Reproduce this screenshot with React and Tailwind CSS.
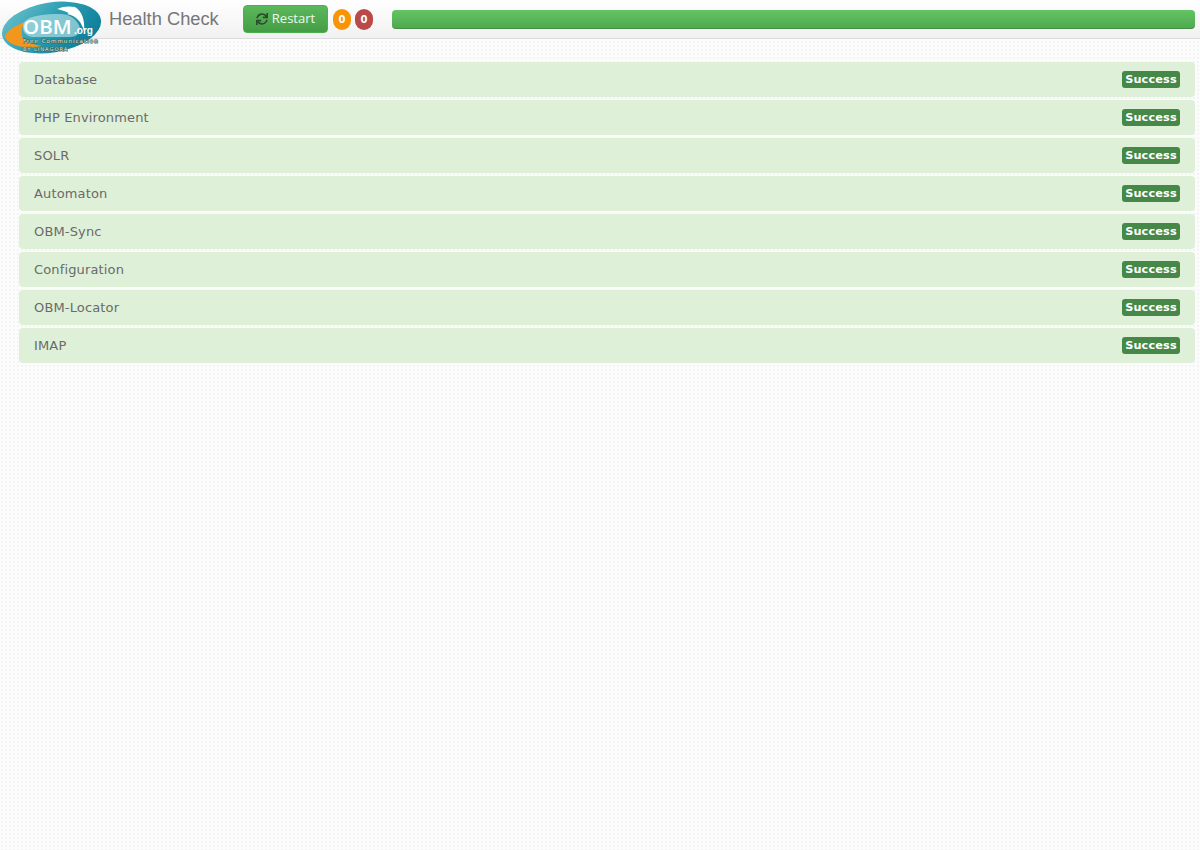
import React from 'react';
import { FaSync } from 'react-icons/fa';

const checks = [
  'Database',
  'PHP Environment',
  'SOLR',
  'Automaton',
  'OBM-Sync',
  'Configuration',
  'OBM-Locator',
  'IMAP'
];

function Logo() {
  return (
    <svg width="104" height="56" viewBox="0 0 104 56" className="absolute left-0 top-0">
      <defs>
        <linearGradient id="teal" x1="0" y1="0" x2="1" y2="0.6">
          <stop offset="0" stopColor="#74c4cd" />
          <stop offset="0.55" stopColor="#2a9db2" />
          <stop offset="1" stopColor="#0f7f9a" />
        </linearGradient>
      </defs>
      <ellipse cx="51.5" cy="27.5" rx="50" ry="25" transform="rotate(-9 51.5 27.5)" fill="url(#teal)" />
      {/* orange swoosh */}
      <path d="M25 22 C14 26 6 31 5 37 C7 42 14 46 24 47 C32 48 38 47 42 46 C30 44 23 41 22 36 C21 30 22 27 25 22Z" fill="#f2971c" />
      {/* pale halo behind the letters */}
      <path d="M24 22 C30 15 46 14 60 14 C70 14 78 20 80 28 C80 34 76 37 70 37 L32 37 C24 36 21 28 24 22Z" fill="#c4e8ea" opacity="0.6" />
      {/* white cloud */}
      <path d="M57 9 C63 6 70 6 75 7 C82 11 85 20 84 31 C82 24 78 16 67 14 C72 13 64 11 57 9Z" fill="#ffffff" />
      <text x="23" y="34" fill="#ffffff" fontFamily="'Open Sans', sans-serif" fontWeight="600" fontSize="20.5">OBM</text>
      <text x="74" y="34" fill="#ffffff" fontFamily="'Liberation Sans', sans-serif" fontWeight="700" fontSize="10">.org</text>
      <text x="23" y="43" fill="#dbe8e2" stroke="#3f6656" strokeWidth="1.1" paintOrder="stroke" fontFamily="'DejaVu Sans', sans-serif" fontSize="5.6" letterSpacing="1">Free Communication</text>
      <text x="23" y="51" fill="#dbe8e2" stroke="#3f6656" strokeWidth="1.1" paintOrder="stroke" fontFamily="'DejaVu Sans', sans-serif" fontSize="5.2" letterSpacing="0.95">BY LINAGORA</text>
    </svg>
  );
}

export default function App() {
  return (
    <div className="relative min-h-[850px] bg-[#fcfcfc] bg-[radial-gradient(#f4f4f4_1px,transparent_1px)] bg-[length:4px_4px] font-['DejaVu_Sans',sans-serif]">
      {/* Header */}
      <header className="flex h-[39px] items-center border-b border-[#dcdcdc] bg-gradient-to-b from-white to-[#f1f1f1] pl-[109px] pr-[5px]">
        <h1 className="w-[134px] font-['Liberation_Sans',sans-serif] text-[18.3px] leading-none text-[#777777]">
          Health Check
        </h1>
        <button className="flex h-[28px] w-[85px] items-center justify-center gap-[4px] rounded-[4px] border border-[#4cae4c] bg-gradient-to-b from-[#5cb85c] to-[#449d44] font-['Open_Sans',sans-serif] text-[13px] text-white/90">
          <FaSync size={12} className="text-[#2b4a2e]" />
          Restart
        </button>
        <span className="ml-[5px] flex h-[21px] w-[18px] items-center justify-center rounded-full bg-[#f89406] text-[10px] font-bold text-white">0</span>
        <span className="ml-[4px] flex h-[21px] w-[18px] items-center justify-center rounded-full bg-[#b94a48] text-[10px] font-bold text-white">0</span>
        <div className="ml-[19px] h-[19px] flex-1 rounded-[4px] bg-gradient-to-b from-[#62c462] to-[#4fa84f] shadow-[inset_0_-1px_0_rgba(0,0,0,0.15)]"></div>
      </header>
      <Logo />

      {/* Check list */}
      <div className="flex flex-col gap-[3px] pl-[19px] pr-[5px] pt-[23px]">
        {checks.map((name) => (
          <div
            key={name}
            className="flex h-[35px] items-center justify-between rounded-[4px] bg-[#dff0d8] px-[15px] text-[13px] tracking-[0.15px] text-[#6a6a6a]"
          >
            <span>{name}</span>
            <span className="mb-[1px] flex h-[17px] w-[58px] items-center justify-center rounded-[3px] bg-[#468847] pt-[1px] text-[11.3px] font-bold leading-none text-white">
              Success
            </span>
          </div>
        ))}
      </div>
    </div>
  );
}
